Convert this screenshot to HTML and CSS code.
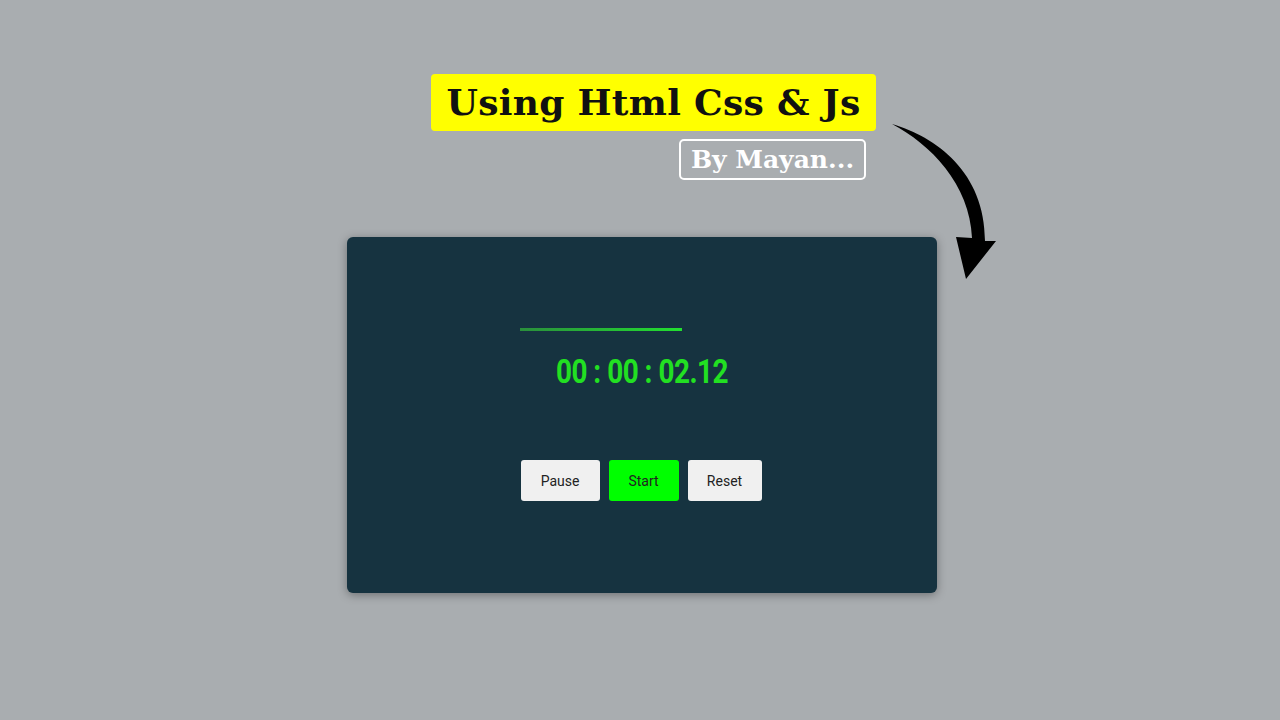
FILE: index.html
```html
<!DOCTYPE html>
<html>
<head>
<meta charset="utf-8">
<link rel="stylesheet" href="styles.css">
</head>
<body>
<div class="page">
  <header class="head">
    <div class="title">Using Html Css &amp; Js</div>
    <div class="byline">By Mayan...</div>
  </header>
  <main class="card">
    <div class="bar"></div>
    <div class="timer"><span class="digits">00 : 00 : 02.12</span></div>
    <div class="buttons">
      <button class="btn pause">Pause</button>
      <button class="btn start">Start</button>
      <button class="btn reset">Reset</button>
    </div>
  </main>
  <svg class="arrow" width="130" height="180" viewBox="0 0 130 180">
    <path d="M12,14 C56,27 105,62 105,131 L116,131 L86,169 L76,127 L92,128 C90,74 50,34 12,14 Z" fill="#000"/>
  </svg>
</div>
</body>
</html>
```
FILE: styles.css
```css
html, body {
  margin: 0;
  padding: 0;
  background: #a9adb0;
  width: 1280px;
  height: 720px;
  overflow: hidden;
}
.page {
  position: relative;
  width: 1280px;
  height: 720px;
  display: flex;
  flex-direction: column;
  align-items: flex-start;
}
.head {
  margin-top: 74px;
  margin-left: 431px;
  width: 445px;
  display: flex;
  flex-direction: column;
}
.title {
  height: 57px;
  background: #ffff00;
  border-radius: 4px;
  font-family: "DejaVu Serif", serif;
  font-weight: bold;
  font-size: 36px;
  line-height: 57px;
  text-align: center;
  color: #111;
  letter-spacing: 0.3px;
}
.byline {
  align-self: flex-end;
  margin-top: 8px;
  margin-right: 10px;
  width: 183px;
  height: 37px;
  border: 2px solid #fff;
  border-radius: 5px;
  color: #fff;
  font-family: "DejaVu Serif", serif;
  font-weight: bold;
  font-size: 25px;
  line-height: 37px;
  text-align: center;
}
.card {
  margin-top: 57px;
  margin-left: 347px;
  width: 590px;
  height: 356px;
  background: #163340;
  border-radius: 6px;
  box-shadow: 0 2px 10px rgba(0,0,0,0.35);
  display: flex;
  flex-direction: column;
  box-sizing: border-box;
  padding-top: 91px;
}
.bar {
  margin-left: 173px;
  width: 162px;
  height: 3px;
  background: linear-gradient(to right, #2a8f3c, #22e030);
}
.timer {
  margin-top: 20px;
  text-align: center;
  font-family: "Roboto", sans-serif;
  font-weight: bold;
  font-size: 34px;
  line-height: 40px;
  color: #22e022;
  letter-spacing: -0.6px;
}
.digits {
  display: inline-block;
  transform: scaleX(0.82);
}
.buttons {
  margin-top: 69px;
  margin-right: 2px;
  display: flex;
  justify-content: center;
  gap: 9px;
}
.btn {
  height: 41px;
  border: none;
  border-radius: 3px;
  background: #f0f0f0;
  font-family: "Roboto", sans-serif;
  font-size: 14px;
  color: #222;
  padding: 0;
}
.pause { width: 79px; }
.start { width: 70px; background: #00ff00; }
.reset { width: 74px; }
.arrow {
  position: absolute;
  left: 880px;
  top: 110px;
}
```
